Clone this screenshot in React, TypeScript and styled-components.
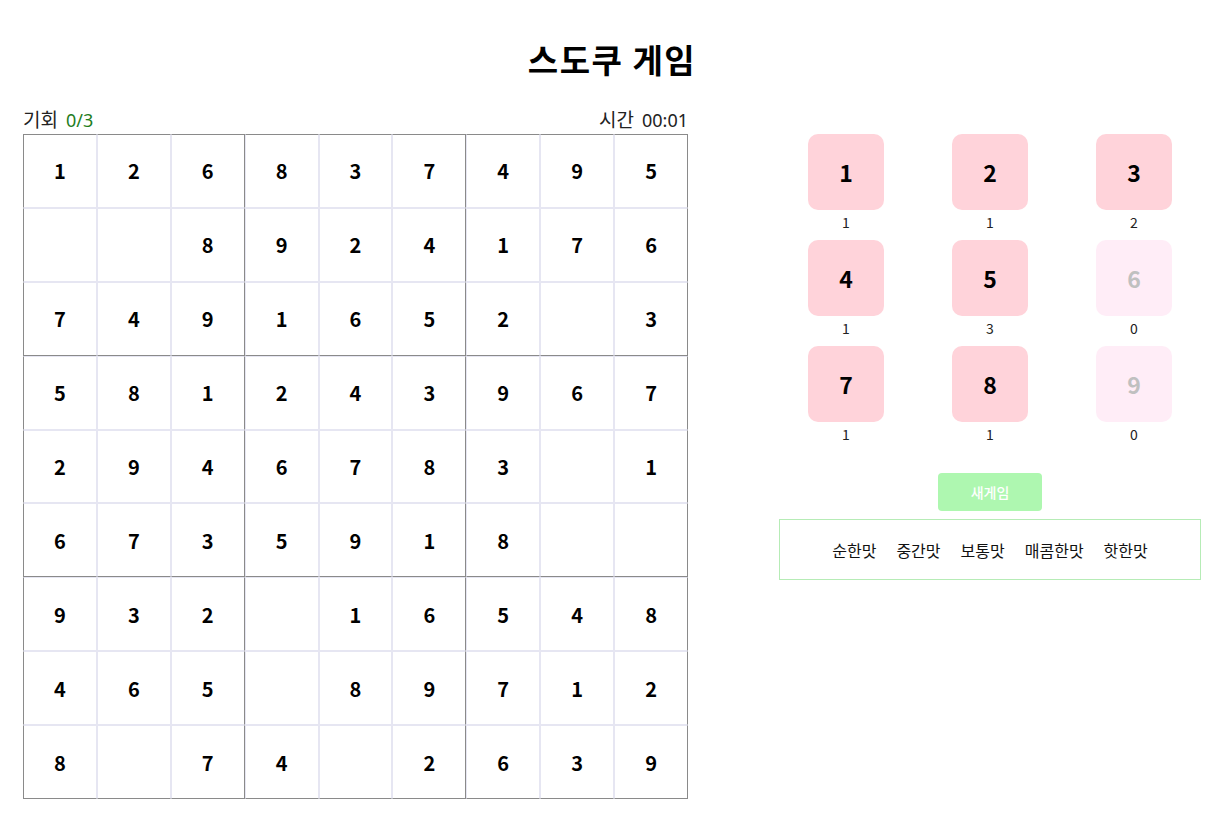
import React from "react";
import styled, { createGlobalStyle } from "styled-components";

const GlobalStyle = createGlobalStyle`
  body {
    margin: 0;
    background: #fff;
    font-family: "Noto Sans CJK KR", "Noto Sans", sans-serif;
    color: #000;
  }
`;

const board: (number | null)[][] = [
  [1, 2, 6, 8, 3, 7, 4, 9, 5],
  [null, null, 8, 9, 2, 4, 1, 7, 6],
  [7, 4, 9, 1, 6, 5, 2, null, 3],
  [5, 8, 1, 2, 4, 3, 9, 6, 7],
  [2, 9, 4, 6, 7, 8, 3, null, 1],
  [6, 7, 3, 5, 9, 1, 8, null, null],
  [9, 3, 2, null, 1, 6, 5, 4, 8],
  [4, 6, 5, null, 8, 9, 7, 1, 2],
  [8, null, 7, 4, null, 2, 6, 3, 9],
];

const levels = ["순한맛", "중간맛", "보통맛", "매콤한맛", "핫한맛"];

const App = () => {
  const counts = [1, 2, 3, 4, 5, 6, 7, 8, 9].map(
    (n) => 9 - board.flat().filter((v) => v === n).length
  );

  return (
    <Page>
      <GlobalStyle />
      <Title>스도쿠 게임</Title>
      <Main>
        <Left>
          <InfoBar>
            <span>
              기회<Value green>0/3</Value>
            </span>
            <span>
              시간<Value>00:01</Value>
            </span>
          </InfoBar>
          <Board>
            {board.map((row, r) =>
              row.map((v, c) => (
                <Cell key={`${r}-${c}`} row={r} col={c}>
                  {v ?? ""}
                </Cell>
              ))
            )}
          </Board>
        </Left>
        <Right>
          <NumPad>
            {counts.map((cnt, i) => (
              <PadItem key={i}>
                <NumButton disabled={cnt === 0}>{i + 1}</NumButton>
                <Count>{cnt}</Count>
              </PadItem>
            ))}
          </NumPad>
          <NewGame>새게임</NewGame>
          <LevelBox>
            {levels.map((l) => (
              <Level key={l}>{l}</Level>
            ))}
          </LevelBox>
        </Right>
      </Main>
    </Page>
  );
};

export default App;

const Page = styled.div`
  width: 1178px;
  padding-left: 23px;
  padding-top: 39px;
`;

const Title = styled.h1`
  margin: 0 0 28px;
  text-align: center;
  font-size: 33px;
  line-height: 40px;
  font-weight: 700;
  letter-spacing: 1.5px;
`;

const Main = styled.div`
  display: flex;
  gap: 91px;
  align-items: flex-start;
`;

const Left = styled.div`
  width: 665px;
  display: flex;
  flex-direction: column;
`;

const InfoBar = styled.div`
  display: flex;
  justify-content: space-between;
  font-size: 19px;
  line-height: 24px;
  height: 27px;
  color: #222;
`;

const Value = styled.span<{ green?: boolean }>`
  margin-left: 8px;
  font-size: 18px;
  color: ${(p) => (p.green ? "#1e7d1e" : "#222")};
  font-family: "Noto Sans", sans-serif;
`;

const Board = styled.div`
  display: grid;
  grid-template-columns: repeat(9, 1fr);
  width: 665px;
`;

const grayish = "#8a8a8a";
const lilac = "#e6e6f2";

const Cell = styled.div<{ row: number; col: number }>`
  height: 73.9px;
  box-sizing: border-box;
  display: flex;
  align-items: center;
  justify-content: center;
  font-size: 20px;
  font-weight: 700;
  border: 1px solid ${lilac};
  border-left-color: ${(p) => (p.col === 0 ? grayish : lilac)};
  border-top-color: ${(p) => (p.row === 0 ? grayish : lilac)};
  border-right-color: ${(p) => (p.col % 3 === 2 ? grayish : lilac)};
  border-bottom-color: ${(p) => (p.row % 3 === 2 ? grayish : lilac)};
`;

const Right = styled.div`
  width: 422px;
  margin-top: 27px;
  display: flex;
  flex-direction: column;
  align-items: center;
`;

const NumPad = styled.div`
  display: grid;
  grid-template-columns: repeat(3, 76px);
  column-gap: 68px;
  row-gap: 8px;
  justify-content: center;
`;

const PadItem = styled.div`
  display: flex;
  flex-direction: column;
  align-items: center;
`;

const NumButton = styled.button`
  width: 76px;
  height: 76px;
  border: none;
  border-radius: 10px;
  background: ${(p) => (p.disabled ? "#ffedf7" : "#ffd3da")};
  color: ${(p) => (p.disabled ? "#c0c0c0" : "#000")};
  font-family: "Noto Sans CJK KR", sans-serif;
  font-size: 23px;
  font-weight: 700;
  padding: 0;
`;

const Count = styled.div`
  margin-top: 2px;
  font-size: 14px;
  line-height: 20px;
  color: #222;
`;

const NewGame = styled.button`
  margin-top: 29px;
  width: 104px;
  height: 38px;
  border: none;
  border-radius: 4px;
  background: #aef7b0;
  color: #fff;
  font-family: "Noto Sans CJK KR", sans-serif;
  font-size: 14px;
  font-weight: 500;
`;

const LevelBox = styled.div`
  margin-top: 8px;
  width: 100%;
  box-sizing: border-box;
  height: 61px;
  border: 1px solid #b6ecb6;
  display: flex;
  justify-content: center;
  align-items: center;
  gap: 20px;
  padding-top: 2px;
`;

const Level = styled.span`
  font-size: 16px;
  line-height: 21px;
  color: #111;
`;
